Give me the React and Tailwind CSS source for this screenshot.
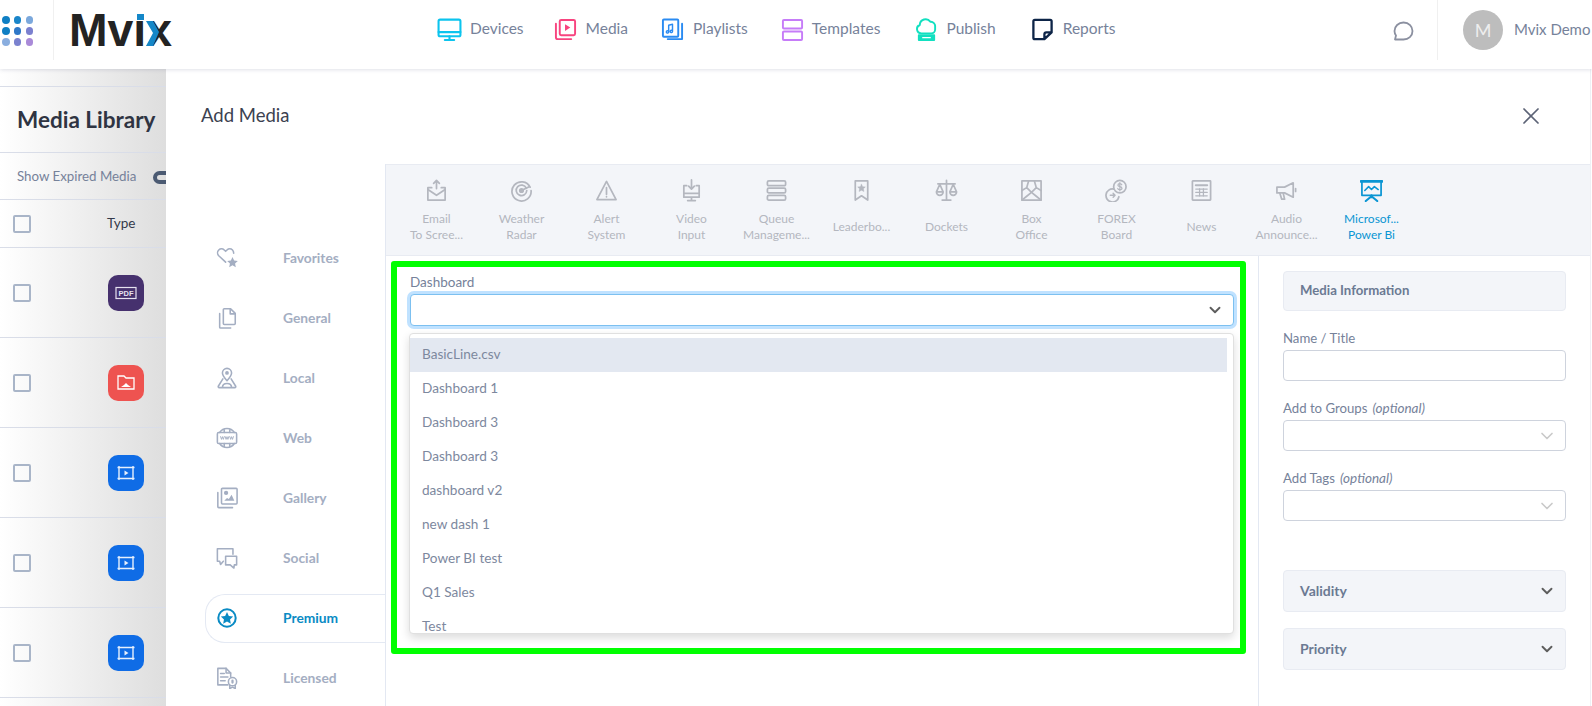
import React from "react";
import { ChevronDown, X } from "lucide-react";

const Svg = ({ size = 24, className = "", sw = 2, children }) => (
  <svg
    width={size}
    height={size}
    viewBox="0 0 24 24"
    fill="none"
    stroke="currentColor"
    strokeWidth={sw}
    strokeLinecap="round"
    strokeLinejoin="round"
    className={className}
  >
    {children}
  </svg>
);

const navItems = [
  {
    label: "Devices",
    size: 25,
    ml: "ml-0",
    gap: "ml-[8px]",
    color: "text-[#0cc4ee]",
    icon: (
      <>
        <rect x="1.5" y="2.5" width="21" height="16" rx="1.5" />
        <path d="M1.5 14.5h21M12 18.5v3M7.5 22h9" />
      </>
    ),
  },
  {
    label: "Media",
    size: 23,
    ml: "ml-[30px]",
    gap: "ml-[9px]",
    color: "text-[#f8447f]",
    icon: (
      <>
        <path d="M2 6v14a2 2 0 0 0 2 2h14" />
        <rect x="6" y="2" width="16" height="16" rx="1.5" />
        <path d="M11.5 6.5v7l5.5-3.5z" fill="currentColor" stroke="none" />
      </>
    ),
  },
  {
    label: "Playlists",
    size: 23,
    ml: "ml-[33px]",
    gap: "ml-[9px]",
    color: "text-[#2a8bf2]",
    icon: (
      <>
        <rect x="2" y="1.5" width="16" height="18" rx="1" />
        <path d="M22 6v16H7" />
        <path d="M8 14.5a1.2 1.2 0 1 0 0 .1M12 14V6.5l-4 1v7M12 14a1.2 1.2 0 1 0 0 .1" strokeWidth="1.5" />
      </>
    ),
  },
  {
    label: "Templates",
    size: 23,
    ml: "ml-[33px]",
    gap: "ml-[8px]",
    color: "text-[#c67cf8]",
    icon: (
      <>
        <rect x="2" y="2" width="20" height="9" rx="1" />
        <rect x="2" y="14" width="20" height="9" rx="1" />
      </>
    ),
  },
  {
    label: "Publish",
    size: 23,
    ml: "ml-[35px]",
    gap: "ml-[8px]",
    color: "text-[#12e0c0]",
    icon: (
      <>
        <path d="M8 16H6.5A4.5 4.5 0 0 1 5 7.3 6 6 0 0 1 16 4a4.5 4.5 0 0 1 5 5v3a4 4 0 0 1-4 4z" />
        <rect x="4" y="18" width="16" height="5" fill="currentColor" />
        <path d="M8 20.5h8" stroke="#ffffff" strokeWidth="1.2" />
      </>
    ),
  },
  {
    label: "Reports",
    size: 23,
    ml: "ml-[35px]",
    gap: "ml-[9px]",
    color: "text-[#0d2447]",
    icon: (
      <path d="M4 2h16a1.5 1.5 0 0 1 1.5 1.5V15L14 22H4a1.5 1.5 0 0 1-1.5-1.5v-17A1.5 1.5 0 0 1 4 2zM21 15h-5a2 2 0 0 0-2 2v5" strokeWidth="2.4" />
    ),
  },
];

const tabs = [
  {
    lines: ["Email", "To Scree..."],
    icon: (
      <>
        <path d="M12 10V2M9 4.5 12 1.5l3 3" />
        <path d="M7 9H3v13h18V9h-4" />
        <path d="M3 11l9 6 9-6" />
      </>
    ),
  },
  {
    lines: ["Weather", "Radar"],
    icon: (
      <>
        <path d="M21 8.5A10 10 0 1 0 22 12" />
        <path d="M17 9.5A5.5 5.5 0 1 0 17.5 12" />
        <circle cx="12" cy="12" r="1.8" fill="currentColor" />
        <path d="M12 12l8-4" />
      </>
    ),
  },
  {
    lines: ["Alert", "System"],
    icon: (
      <>
        <path d="M12 2.5 2 21.5h20z" />
        <path d="M12 9v7M12 18.5v.1" />
      </>
    ),
  },
  {
    lines: ["Video", "Input"],
    icon: (
      <>
        <path d="M12 1v9M9 7.5l3 3 3-3" />
        <path d="M7 7H4v12h16V7h-3M4 15h16M12 19v3M8 22.5h8" />
      </>
    ),
  },
  {
    lines: ["Queue", "Manageme..."],
    icon: (
      <>
        <rect x="2.5" y="2" width="19" height="5" rx="1.5" />
        <rect x="2.5" y="9.5" width="19" height="5" rx="1.5" />
        <rect x="2.5" y="17" width="19" height="5" rx="1.5" />
      </>
    ),
  },
  {
    lines: ["Leaderbo..."],
    icon: (
      <>
        <path d="M5.5 2h13v20L12 17.5 5.5 22z" />
        <path d="M12 5.5l1.2 2.5 2.8.3-2 1.9.5 2.8-2.5-1.3-2.5 1.3.5-2.8-2-1.9 2.8-.3z" fill="currentColor" strokeWidth="0.5" />
      </>
    ),
  },
  {
    lines: ["Dockets"],
    icon: (
      <>
        <path d="M12 1.5V21M7.5 22h9M3 5h18" />
        <path d="M1.5 13.5 5 5.500l3.500 8a3.500 3.500 0 0 1-7 0zM15.500 13.500 19 5.500l3.500 8a3.500 3.500 0 0 1-7 0zM1.500 13.500h7M15.500 13.500h7" />
      </>
    ),
  },
  {
    lines: ["Box", "Office"],
    icon: (
      <>
        <rect x="2" y="2" width="20" height="20" />
        <path d="M2 12l5-3 2-7M22 12l-5-3-2-7M2 22l5-4 5-4 5 4 5 4M7 9l5 5 5-5" />
      </>
    ),
  },
  {
    lines: ["FOREX", "Board"],
    icon: (
      <>
        <circle cx="15.5" cy="8" r="6.5" />
        <path d="M9 10.5a6.8 6.8 0 1 0 5.5 8" />
        <path d="M17.5 6a2 2 0 0 0-2-1.2c-1.3 0-2 .7-2 1.6 0 2.2 4.2 1 4.2 3.2 0 .9-.9 1.600-2.200 1.600a2.200 2.200 0 0 1-2.200-1.300M15.500 3.800v8.500" strokeWidth="1.3" />
        <path d="M5.500 17h5M8.500 15l2 2-2 2" strokeWidth="1.5" />
      </>
    ),
  },
  {
    lines: ["News"],
    icon: (
      <>
        <rect x="2.5" y="2" width="19" height="20" rx="0.5" />
        <path d="M6 6.5h12" strokeWidth="2" />
        <path d="M6 10.5h12M6 14h12M6 17.5h12M10 10v8M14 10v8" strokeWidth="1.3" />
      </>
    ),
  },
  {
    lines: ["Audio", "Announce..."],
    icon: (
      <>
        <path d="M2 8.5h8L19 4v15l-9-4.500H2z" />
        <path d="M5 14.500 7 21h3l-1.500-6.500M21.500 10v3" />
      </>
    ),
  },
  {
    lines: ["Microsof...", "Power Bi"],
    active: true,
    icon: (
      <>
        <path d="M2 2h20v15H2z" />
        <path d="M1 2.5h22" strokeWidth="2.8" />
        <path d="M5 12l4-4 3 3 3-3 4 3" strokeWidth="1.6" />
        <path d="M12 17v2M6 23l6-5 6 5" strokeWidth="2.2" />
      </>
    ),
  },
];

const railItems = [
  {
    label: "Favorites",
    icon: (
      <>
        <path d="M10.5 16.5 3 9.500a4.500 4.500 0 0 1 0-6.300 4.300 4.300 0 0 1 6 0l1.500 1.500L12 3.200a4.300 4.300 0 0 1 6 0c1 1 1.300 2 1.300 3.500" />
        <path d="M18 11l1.800 3.700 4 .5-3 2.800.8 4-3.600-2-3.600 2 .8-4-3-2.800 4-.5z" fill="currentColor" stroke="none" />
      </>
    ),
  },
  {
    label: "General",
    icon: (
      <>
        <path d="M9 2h7l5 5v11a1 1 0 0 1-1 1H9a1 1 0 0 1-1-1V3a1 1 0 0 1 1-1z" />
        <path d="M15.5 2v5.5H21" />
        <path d="M4 7v15a1 1 0 0 0 1 1h11" />
      </>
    ),
  },
  {
    label: "Local",
    icon: (
      <>
        <path d="M12 15c-3-3.5-5-6-5-8.500a5 5 0 0 1 10 0c0 2.500-2 5-5 8.500z" />
        <circle cx="12" cy="6.5" r="1.2" fill="currentColor" />
        <path d="M7.5 13l-5 8c-.3.7 0 1.5 1 1.5h17c1 0 1.3-.8 1-1.500l-5-8M7 22.500c0-3.500 2-4.500 5-4.500s5 1 5 4.500" />
      </>
    ),
  },
  {
    label: "Web",
    icon: (
      <>
        <rect x="1.5" y="6" width="21" height="12" rx="1.5" />
        <path d="M4 6a9.5 9.5 0 0 1 16 0M4 18a9.5 9.5 0 0 0 16 0M9 3v3M15 3v3M9 18v3M15 18v3" />
        <path d="M5 10.5l1 3 1-3 1 3 1-3M10 10.5l1 3 1-3 1 3 1-3M15 10.5l1 3 1-3 1 3 1-3" strokeWidth="1" />
      </>
    ),
  },
  {
    label: "Gallery",
    icon: (
      <>
        <rect x="6" y="1.5" width="17" height="17" rx="1" />
        <path d="M2 6v15.5a1 1 0 0 0 1 1h15" />
        <circle cx="11" cy="6.5" r="1.5" fill="currentColor" />
        <path d="M9 15l3-3 2 1 3-4.500 3 6.500z" fill="currentColor" stroke="none" />
      </>
    ),
  },
  {
    label: "Social",
    icon: (
      <>
        <path d="M8 15.5 5 19l-1-3.500H1.500V2h17v6" />
        <path d="M10.5 10h12v9.500H20l-.5 3.500-4-3.500h-5z" />
      </>
    ),
  },
  {
    label: "Premium",
    active: true,
    icon: (
      <>
        <circle cx="12" cy="12" r="9.5" strokeWidth="2.2" />
        <path d="M12 5.5l2 4.3 4.7.6-3.4 3.200.9 4.600-4.200-2.300-4.200 2.300.9-4.600-3.400-3.200 4.700-.6z" fill="currentColor" stroke="none" />
      </>
    ),
  },
  {
    label: "Licensed",
    icon: (
      <>
        <path d="M13 19.5H2V1.5h9l5 5v4" />
        <path d="M11 1.5v5h5M5 7h4M5 11h8M5 15h5" />
        <circle cx="18" cy="16" r="4.5" />
        <path d="M15 20v3.5l3-1.5 3 1.5V20" />
        <path d="M18 15v2" strokeWidth="2.5" />
      </>
    ),
  },
];

const rows = [
  {
    bg: "bg-[#46316e]",
    icon: (
      <svg width="22" height="14" viewBox="0 0 22 14" fill="none" stroke="#e6e2f0" strokeWidth="1.2">
        <rect x="1" y="1.5" width="20" height="11" />
        <text x="11" y="10" textAnchor="middle" fontSize="7.5" fontWeight="700" fill="#e6e2f0" stroke="none" fontFamily="Liberation Sans, sans-serif">PDF</text>
      </svg>
    ),
  },
  {
    bg: "bg-[#ee5350]",
    icon: (
      <svg width="18" height="15" viewBox="0 0 18 15" fill="none" stroke="#fff" strokeWidth="1.3">
        <path d="M1 1h6l2 2h8v11H1z" />
        <path d="M4 12l3-2 2-2 2 2 3 2z" fill="#fff" stroke="none" />
      </svg>
    ),
  },
  { bg: "bg-[#0f6ce6]" },
  { bg: "bg-[#0f6ce6]" },
  { bg: "bg-[#0f6ce6]" },
];

const FilmIcon = () => (
  <svg width="18" height="16" viewBox="0 0 18 16" fill="none" stroke="#e6effc" strokeWidth="1.4">
    <path d="M2 1v14M16 1v14M0.5 2.5h17M0.5 13.5h17" />
    <path d="M7.5 5.5v5l4-2.500z" fill="#e6effc" stroke="none" />
  </svg>
);

const options = [
  "BasicLine.csv",
  "Dashboard 1",
  "Dashboard 3",
  "Dashboard 3",
  "dashboard v2",
  "new dash 1",
  "Power BI test",
  "Q1 Sales",
  "Test",
];

const dotColors = [
  "bg-[#0f7fc4]",
  "bg-[#1a85c9]",
  "bg-[#7ba8dc]",
  "bg-[#0f7fc4]",
  "bg-[#2f78c8]",
  "bg-[#7b80cf]",
  "bg-[#8aaedf]",
  "bg-[#7b82cf]",
  "bg-[#a98ad8]",
];

// the wordmark is one text run, the blue parts sit on top of it
const Logo = () => (
  <svg width="104" height="60" viewBox="0 0 104 60" className="ml-[15px]">
    <text
      x="0"
      y="46"
      fontSize="47"
      fontWeight="700"
      fill="#232323"
      fontFamily="Liberation Sans, sans-serif"
      textLength="103"
      lengthAdjust="spacingAndGlyphs"
    >
      Mvıx
    </text>
    <rect x="68" y="14" width="7" height="6" fill="#1487c8" />
    <path d="M77 21h7l6 11-6 14h-7l7-13z" fill="#1487c8" />
  </svg>
);

const Field = ({ label, optional, select }) => (
  <div className="mt-[18px]">
    <div className="text-[13.2px] leading-[18px] text-[#76829a]">
      {label}
      {optional && <span className="ml-[5px] text-[13.5px] italic">(optional)</span>}
    </div>
    <div className="mt-[3px] flex h-[31px] items-center justify-end rounded-[4px] border border-[#ced3dd] bg-white pr-[8px]">
      {select && <ChevronDown size={20} strokeWidth={2} className="text-[#c9c9c9]" />}
    </div>
  </div>
);

const Collapse = ({ label, className }) => (
  <div className={`flex h-[42px] items-center justify-between rounded-[4px] border border-[#e8ebf2] bg-[#f3f5f9] pl-[16px] pr-[9px] ${className}`}>
    <span className="mb-[1px] text-[14px] font-bold text-[#6b7a93]">{label}</span>
    <ChevronDown size={18} strokeWidth={2.5} className="text-[#5d5d5d]" />
  </div>
);

export default function App() {
  return (
    <div className="flex h-[706px] w-[1592px] flex-col overflow-hidden bg-white font-['Lato','Liberation_Sans',sans-serif]">
      {/* Top bar */}
      <header className="relative z-10 flex h-[69px] shrink-0 items-start bg-white shadow-[0_1px_4px_rgba(60,70,110,0.16)]">
        <div className="mt-[16px] ml-[2px] grid w-[32px] grid-cols-3 gap-x-[3.5px] gap-y-[3.5px]">
          {dotColors.map((c, i) => (
            <span key={i} className={`h-[7.5px] w-[7.5px] rounded-full ${c}`} />
          ))}
        </div>
        <div className="ml-[19px] h-[60px] w-px bg-[#f0f0f0]" />
        <Logo />

        <nav className="ml-[264px] flex h-[58px] items-center">
          {navItems.map((item) => (
            <div key={item.label} className={`flex items-center ${item.ml}`}>
              <Svg size={item.size} className={item.color}>
                {item.icon}
              </Svg>
              <span className={`${item.gap} mb-[1px] text-[15.5px] text-[#76829a]`}>{item.label}</span>
            </div>
          ))}
        </nav>

        <div className="ml-auto flex h-[60px] items-center">
          <svg width="22" height="20" viewBox="0 0 22 20" fill="none" stroke="#8b90a0" strokeWidth="1.8" className="mt-[2px]">
            <path d="M3 18.5h8.5c5 0 9-3.3 9-8.5 0-4.5-3.5-8.5-9-8.5-5 0-9 3.800-9 8.500 0 1.800.5 3.200 1.500 4.500z" strokeLinejoin="round" />
          </svg>
          <div className="ml-[23px] h-full w-px bg-[#f0f0f0]" />
          <div className="ml-[25px] flex h-[40px] w-[40px] items-center justify-center rounded-full bg-[#bdbdbd] text-[18px] text-[#eeeeee]">
            M
          </div>
          <span className="ml-[11px] mb-[2px] w-[78px] whitespace-nowrap text-[15px] text-[#76829a]">Mvix Demo</span>
        </div>
      </header>

      <div className="flex min-h-0 flex-1">
        {/* Page behind the drawer */}
        <div className="w-[166px] shrink-0 bg-gradient-to-r from-white to-[#dedede] pt-[17px]">
          <div className="flex h-[67px] items-center whitespace-nowrap border-y border-[#d9dde8] pl-[17px] text-[22.5px] font-bold text-[#2f3442]">
            Media Library
          </div>
          <div className="flex h-[47px] items-center overflow-hidden whitespace-nowrap border-b border-[#d9dde8] pl-[17px] pt-[2px] text-[13.3px] text-[#76829a]">
            Show Expired Media
            <span className="ml-[17px] h-[13px] w-[24px] shrink-0 rounded-full border-[4px] border-[#4b5a72]" />
          </div>
          <div className="flex h-[48px] items-center border-b border-[#d9dde8] pl-[13px]">
            <span className="h-[18px] w-[18px] rounded-[2px] border-2 border-[#a9b5c8]" />
            <span className="ml-[76px] text-[13.5px] text-[#33394a]">Type</span>
          </div>
          {rows.map((row, i) => (
            <div key={i} className="flex h-[90px] items-center border-b border-[#d9dde8] pl-[13px]">
              <span className="h-[18px] w-[18px] rounded-[2px] border-2 border-[#a9b5c8]" />
              <span className={`ml-[77px] flex h-[36px] w-[36px] items-center justify-center rounded-[10px] ${row.bg}`}>
                {row.icon || <FilmIcon />}
              </span>
            </div>
          ))}
        </div>

        {/* Add Media drawer */}
        <div className="mr-px flex min-w-0 flex-1 flex-col border-r border-[#eef0f5] bg-white">
          <div className="flex h-[95px] shrink-0 items-start justify-between pl-[35px] pr-[45px] pt-[33px]">
            <h1 className="text-[18.5px] leading-[26px] text-[#3b4150]">Add Media</h1>
            <X size={28} strokeWidth={1.5} className="text-[#5c6376]" />
          </div>

          <div className="flex min-h-0 flex-1">
            {/* Category rail */}
            <div className="w-[219px] shrink-0 pl-[39px] pt-[64px]">
              {railItems.map((item) => (
                <div key={item.label} className="flex h-[60px] items-center">
                  <div
                    className={`flex h-[49px] w-full items-center border pl-[10px] ${
                      item.active
                        ? "rounded-l-[20px] border-r-0 border-[#e4e9f3] text-[#0a8bc4]"
                        : "border-transparent text-[#a4aec2]"
                    }`}
                  >
                    <Svg size={22} sw={1.7}>
                      {item.icon}
                    </Svg>
                    <span className="ml-[45px] text-[13.8px] font-bold">{item.label}</span>
                  </div>
                </div>
              ))}
            </div>

            <div className="flex min-w-0 flex-1 flex-col border-l border-[#e3e8f2]">
              {/* Media type tabs */}
              <div className="flex h-[92px] shrink-0 border-y border-[#e8ebf2] bg-[#f3f5f9] pl-[8px] pt-[14px]">
                {tabs.map((tab) => (
                  <div
                    key={tab.lines[0]}
                    className={`flex w-[85px] shrink-0 flex-col items-center text-center text-[12px] leading-[16px] ${
                      tab.active ? "text-[#0a95d3]" : "text-[#b4b7bf]"
                    }`}
                  >
                    <Svg size={23} sw={1.8}>
                      {tab.icon}
                    </Svg>
                    <div className="mt-[9px] flex h-[32px] flex-col justify-center whitespace-nowrap">
                      {tab.lines.map((line) => (
                        <span key={line}>{line}</span>
                      ))}
                    </div>
                  </div>
                ))}
              </div>

              <div className="flex min-h-0 flex-1">
                {/* Highlighted dashboard picker */}
                <div className="w-[872px] shrink-0 pl-[5px] pr-[12px] pt-[5px]">
                  <div className="h-[393px] rounded-[3px] border-[6px] border-[#00ff00] pl-[13px] pr-[6px] pt-[6px]">
                    <div className="text-[13.5px] leading-[18px] text-[#76829a]">Dashboard</div>
                    <div className="mt-[3px] flex h-[32px] items-center justify-end rounded-[4px] border border-[#7cc0f0] bg-white pr-[9px] shadow-[0_0_0_3px_#c0e2ff]">
                      <ChevronDown size={18} strokeWidth={2.5} className="text-[#5d5d5d]" />
                    </div>
                    <div className="mt-[7px] -ml-px h-[301px] overflow-hidden rounded-[4px] border border-[#e0e0e0] bg-white pr-[6px] pt-[4px] shadow-[0_4px_10px_rgba(0,0,0,0.14)]">
                      {options.map((opt, i) => (
                        <div
                          key={i}
                          className={`flex h-[34px] shrink-0 items-center pb-[1px] pl-[12px] text-[13.6px] text-[#7d889e] ${
                            i === 0 ? "bg-[#e3e8f1]" : ""
                          }`}
                        >
                          {opt}
                        </div>
                      ))}
                    </div>
                  </div>
                </div>

                {/* Media information */}
                <div className="min-w-0 flex-1 border-l border-[#e3e8f2] pl-[24px] pr-[24px] pt-[15px]">
                  <div className="flex h-[40px] items-center rounded-[4px] border border-[#e8ebf2] bg-[#f3f5f9] pl-[16px] text-[13.2px] font-bold text-[#6b7a93]">
                    Media Information
                  </div>
                  <Field label="Name / Title" />
                  <Field label="Add to Groups" optional select />
                  <Field label="Add Tags" optional select />
                  <Collapse label="Validity" className="mt-[49px]" />
                  <Collapse label="Priority" className="mt-[16px]" />
                </div>
              </div>
            </div>
          </div>
        </div>
      </div>
    </div>
  );
}
